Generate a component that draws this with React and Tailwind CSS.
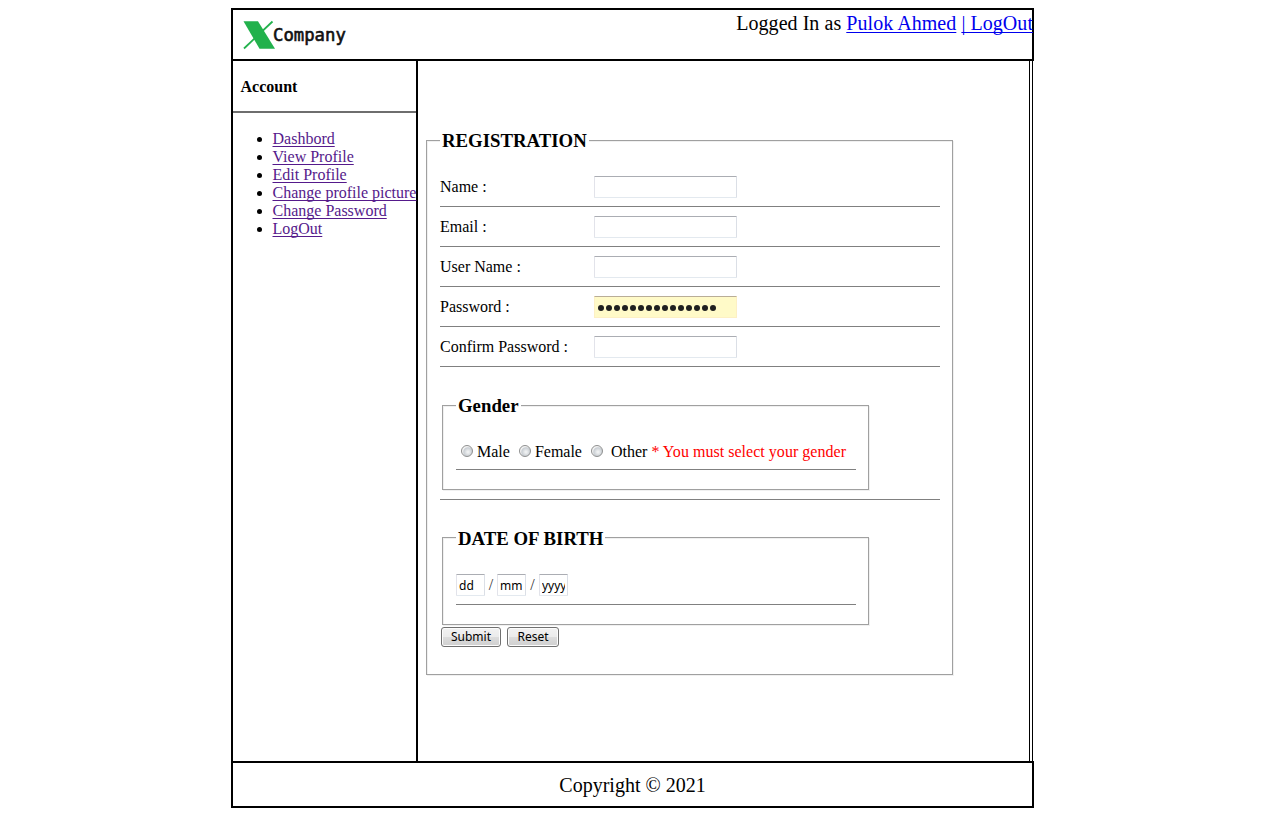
const links = ["Dashbord", "View Profile", "Edit Profile", "Change profile picture", "Change Password", "LogOut"];
const fields = [
  { label: "Name :" },
  { label: "Email :" },
  { label: "User Name :" },
  { label: "Password :", filled: true },
  { label: "Confirm Password :" },
];

const uiFont = "font-['Noto_Sans',sans-serif]";
const groove = "min-w-0 border border-[#a0a0a0] shadow-[1px_1px_0_#f0f0f0,inset_1px_1px_0_#f0f0f0]";
const inputBox =
  "block h-[22px] rounded-[1px] border border-t-[#abadb3] border-r-[#dbdfe6] border-b-[#e3e9ef] border-l-[#e2e3ea] bg-white outline-none";
const linkLine = "underline decoration-1 underline-offset-[2px] [text-decoration-skip-ink:none]";

function Logo() {
  return (
    <div className="flex pl-[9px] pt-[10px]">
      <svg width="33" height="30" viewBox="0 0 33 30" className="shrink-0">
        <path d="M2 28.5 L30.5 1.5" stroke="#22b14c" strokeWidth="1.8" />
        <path d="M1.5 1.3 H16 L33 28.7 H17.5 Z" fill="#22b14c" />
      </svg>
      <span className="-ml-[2px] font-['DejaVu_Sans_Mono',monospace] text-[17.3px] leading-[30px] text-[#111] [-webkit-text-stroke:0.6px_#111]">
        Company
      </span>
    </div>
  );
}

function Legend({ children }) {
  return (
    <legend className="ml-[13px] h-[21px] bg-white px-[2px] text-[18.8px] font-bold leading-[21px]">{children}</legend>
  );
}

function Radio({ className }) {
  return (
    <span
      className={
        "relative -top-px inline-block h-3 w-3 shrink-0 rounded-full border border-[#8e8f8f] bg-[radial-gradient(circle_at_60%_60%,#eef0f1_10%,#c9ced3_50%,#f4f4f4_64%)] " +
        className
      }
    />
  );
}

function Button({ children, className }) {
  return (
    <button
      className={
        "h-5 rounded-[3px] border border-[#707070] bg-[linear-gradient(#f2f2f2,#ebebeb_50%,#dddddd_50%,#cfcfcf)] text-center text-[12px] leading-[18px] shadow-[inset_0_0_0_1px_#fcfcfc] " +
        uiFont + " " + className
      }
    >
      {children}
    </button>
  );
}

export default function App() {
  return (
    <div className="flow-root h-[816px] bg-white font-['Liberation_Serif',serif] text-base leading-[18px] text-black">
      <div className="ml-[231px] mt-2 w-[803px]">
        <header className="flex h-[53px] justify-between border-2 border-black">
          <Logo />
          <div className="-mr-px whitespace-nowrap text-[20px] leading-[26px] tracking-[0.05px]">
            Logged In as{" "}
            <a className={"text-[#0000ee] " + linkLine}>Pulok Ahmed</a>{" "}
            <a className={"text-[#0000ee] " + linkLine}>| LogOut</a>
          </div>
        </header>

        <div className="flex h-[700px] w-[802px] border-l-2 border-r border-black pr-[2px]">
          <aside className="w-[185px] shrink-0 border-r-2 border-black">
            <div className="h-[52px] border-b-2 border-[#6e6e6e] pl-[7.5px] pt-[17px] font-bold">Account</div>
            <ul className="list-disc whitespace-nowrap pl-[39.5px] pt-[17px]">
              {links.map((l) => (
                <li key={l}>
                  <a className={"text-[#551a8b] " + linkLine}>{l}</a>
                </li>
              ))}
            </ul>
          </aside>

          <main className="grow border-r border-black pl-2 pt-[69px]">
            <fieldset className={"h-[545px] w-[527px] " + groove}>
              <Legend>REGISTRATION</Legend>
              <div className="ml-[13px] w-[500px] pt-4">
                {fields.map((f) => (
                  <div key={f.label} className="flex h-10 border-b border-[#808080] pt-[9px]">
                    <label className="w-[154px] leading-[22px]">{f.label}</label>
                    {f.filled ? (
                      <div className="flex h-[22px] w-[143px] items-center gap-[2px] border border-[#fdf0c4] border-t-[#b9ad97] bg-[#fffac8] pl-[3px] pt-px">
                        {Array.from({ length: 15 }, (_, i) => (
                          <span key={i} className="h-[6px] w-[6px] rounded-full bg-[#1f1f1f]" />
                        ))}
                      </div>
                    ) : (
                      <input className={"w-[143px] " + inputBox} />
                    )}
                  </div>
                ))}

                <div className="h-[133px] border-b border-[#808080] pl-[2px] pt-[28px]">
                  <fieldset className={"h-[95px] w-[427px] " + groove}>
                    <Legend>Gender</Legend>
                    <div className="ml-[13px] flex h-[54px] w-[400px] items-center whitespace-nowrap border-b border-[#808080] pt-[18px]">
                      <Radio className="ml-[5px] mr-1" />
                      Male
                      <Radio className="ml-[9px] mr-1" />
                      Female
                      <Radio className="ml-[9px] mr-2" />
                      Other
                      <span className="ml-1 tracking-[0.03px] text-[#ff0000]">* You must select your gender</span>
                    </div>
                  </fieldset>
                </div>

                <div className="pl-[2px] pt-[27px]">
                  <fieldset className={"h-[98px] w-[427px] " + groove}>
                    <Legend><span className="relative top-px">DATE OF BIRTH</span></Legend>
                    <div className="ml-[13px] flex h-[57px] w-[400px] border-b border-[#808080] pt-[26px] leading-[22px]">
                      <input defaultValue="dd" className={"w-[29px] px-[2px] pt-px text-[12px] " + uiFont + " " + inputBox} />
                      <span className="w-3 text-center text-[#333]">/</span>
                      <input defaultValue="mm" className={"w-[29px] px-[2px] pt-px text-[12px] " + uiFont + " " + inputBox} />
                      <span className="w-[13px] text-center text-[#333]">/</span>
                      <input defaultValue="yyyy" className={"w-[29px] px-[2px] pt-px text-[12px] " + uiFont + " " + inputBox} />
                    </div>
                  </fieldset>
                </div>
                <div className="flex gap-[6px] pl-px pt-[2px]">
                  <Button className="w-[60px]">Submit</Button>
                  <Button className="w-[52px]">Reset</Button>
                </div>
              </div>
            </fieldset>
          </main>
        </div>

        <footer className="h-[47px] border-2 border-black text-center text-[20px] leading-[45px]">Copyright © 2021</footer>
      </div>
    </div>
  );
}
